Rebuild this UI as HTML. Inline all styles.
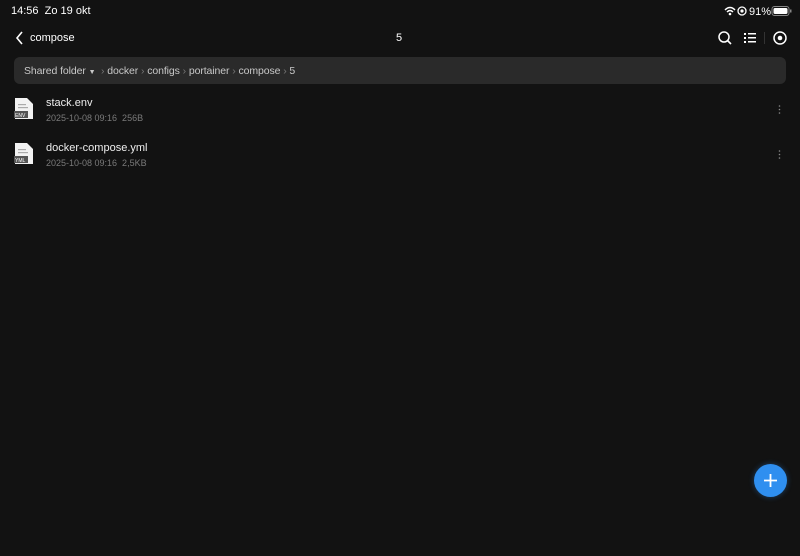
<!DOCTYPE html>
<html><head><style>
*{margin:0;padding:0;box-sizing:border-box}
body{width:800px;height:556px;background:#121212;font-family:"Liberation Sans",sans-serif;color:#e8e8e8;position:relative;overflow:hidden}
.a{position:absolute;white-space:nowrap}
.crumb{position:absolute;left:14px;top:57px;width:772px;height:27px;background:#2a2a2a;border-radius:6px}
.cr{position:absolute;top:65px;font-size:10.5px;color:#c8c8c8;letter-spacing:-0.1px}
.sep{color:#777}
.name{font-size:11px;color:#eee}
.meta{font-size:9px;color:#7a7a7a}
</style></head><body>
<div class="a" style="left:11px;top:5px;font-size:11px;color:#fff">14:56&nbsp;&nbsp;Zo 19 okt</div>
<div class="a" style="left:724px;top:4px;width:70px;height:14px">
<svg width="70" height="14" viewBox="0 0 70 14">
<path d="M1 6 Q6 1 11 6 M3 8 Q6 5 9 8" stroke="#fff" stroke-width="1.5" fill="none"/><circle cx="6" cy="10" r="1.3" fill="#fff"/>
<circle cx="18" cy="7" r="4" stroke="#fff" stroke-width="1.3" fill="none"/><circle cx="18" cy="7" r="1.6" fill="#fff"/>
<text x="25" y="11" font-size="11" fill="#fff" font-family="Liberation Sans">91%</text>
<rect x="48" y="2.5" width="17" height="9" rx="2.5" stroke="#888" fill="none"/><rect x="49.5" y="4" width="14" height="6" rx="1.5" fill="#fff"/><rect x="66" y="5.5" width="1.5" height="3" fill="#888"/>
</svg></div>
<svg class="a" style="left:15px;top:31px" width="10" height="14"><path d="M7 1 L2 7 L7 13" stroke="#fff" stroke-width="1.6" fill="none"/></svg>
<div class="a" style="left:30px;top:32px;font-size:11px;color:#fff">compose</div>
<div class="a" style="left:396px;top:32px;font-size:11px;color:#fff">5</div>
<svg class="a" style="left:716px;top:30px" width="72" height="17">
<circle cx="8" cy="7" r="5" stroke="#fff" stroke-width="1.5" fill="none"/><path d="M11.5 10.5 L15 14" stroke="#fff" stroke-width="1.6"/>
<g fill="#fff"><rect x="28" y="3" width="2" height="2"/><rect x="28" y="7" width="2" height="2"/><rect x="28" y="11" width="2" height="2"/>
<rect x="32" y="3" width="8" height="1.5"/><rect x="32" y="7" width="8" height="1.5"/><rect x="32" y="11" width="8" height="1.5"/></g>
<rect x="48" y="2" width="1" height="12" fill="#333"/>
<circle cx="64" cy="8" r="6" stroke="#fff" stroke-width="1.5" fill="none"/><circle cx="64" cy="8" r="2.3" fill="#fff"/>
</svg>
<div class="crumb"></div>
<div class="cr" style="left:24px">Shared folder <span style="font-size:7px">▼</span> &nbsp;<span class="sep">›</span> docker <span class="sep">›</span> configs <span class="sep">›</span> portainer <span class="sep">›</span> compose <span class="sep">›</span> 5</div>
<svg class="a" style="left:13px;top:97px" width="22" height="24"><path d="M2 1 H14 L20 7 V22 H2 Z" fill="#f2f2f2"/><rect x="5" y="7" width="8" height="1.2" fill="#aaa"/><rect x="5" y="10" width="10" height="1.2" fill="#aaa"/><rect x="1" y="14" width="14" height="7" fill="#555"/><text x="2" y="20" font-size="5" fill="#fff" font-family="Liberation Sans">ENV</text></svg>
<div class="a name" style="left:46px;top:97px">stack.env</div>
<div class="a meta" style="left:46px;top:113px">2025-10-08 09:16&nbsp;&nbsp;256B</div>
<svg class="a" style="left:13px;top:142px" width="22" height="24"><path d="M2 1 H14 L20 7 V22 H2 Z" fill="#f2f2f2"/><rect x="5" y="7" width="8" height="1.2" fill="#aaa"/><rect x="5" y="10" width="10" height="1.2" fill="#aaa"/><rect x="1" y="14" width="14" height="7" fill="#555"/><text x="2" y="20" font-size="5" fill="#fff" font-family="Liberation Sans">YML</text></svg>
<div class="a name" style="left:46px;top:142px">docker-compose.yml</div>
<div class="a meta" style="left:46px;top:158px">2025-10-08 09:16&nbsp;&nbsp;2,5KB</div>
<svg class="a" style="left:778px;top:105px" width="3" height="9"><circle cx="1.5" cy="1" r=".8" fill="#888"/><circle cx="1.5" cy="4.5" r=".8" fill="#888"/><circle cx="1.5" cy="8" r=".8" fill="#888"/></svg>
<svg class="a" style="left:778px;top:150px" width="3" height="9"><circle cx="1.5" cy="1" r=".8" fill="#888"/><circle cx="1.5" cy="4.5" r=".8" fill="#888"/><circle cx="1.5" cy="8" r=".8" fill="#888"/></svg>
<div class="a" style="left:754px;top:464px;width:33px;height:33px;border-radius:50%;background:#2f8ff0;box-shadow:0 0 6px rgba(47,143,240,.4)"></div>
<svg class="a" style="left:762px;top:472px" width="17" height="17"><path d="M8.5 2 V15 M2 8.5 H15" stroke="#fff" stroke-width="1.8"/></svg>
</body></html>
